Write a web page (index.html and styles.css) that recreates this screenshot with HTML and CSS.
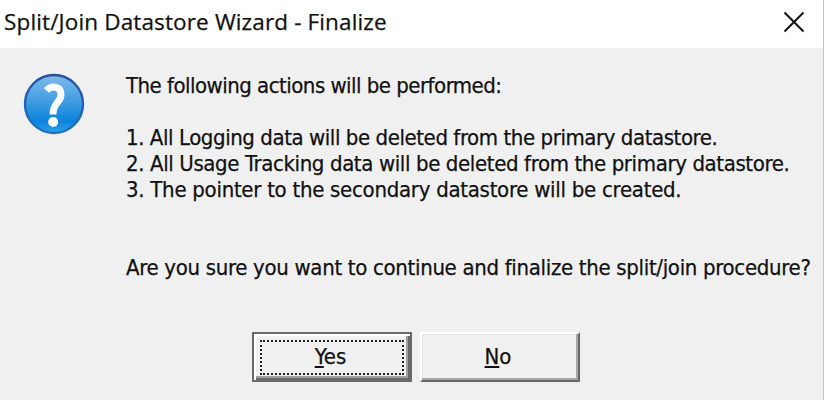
FILE: index.html
```html
<!DOCTYPE html>
<html lang="en">

<head>
	<meta charset="utf-8">
	<title>Split/Join Datastore Wizard - Finalize</title>

	<link rel="stylesheet" href="styles.css">

</head>

<body>

	<div class="dialog">
		<div class="titlebar">
			<span class="title">Split/Join Datastore Wizard - Finalize</span>
			<svg class="close" viewBox="0 0 22 22">
				<path d="M1.5 1.5 L20.5 20.5 M20.5 1.5 L1.5 20.5" />
			</svg>
		</div>

		<div class="content">
			<svg class="icon" viewBox="0 0 62 62">
				<defs>
					<linearGradient id="blue" x1="0" y1="0" x2="0" y2="1">
						<stop offset="0" stop-color="#7cbcec" />
						<stop offset=".45" stop-color="#429de0" />
						<stop offset=".8" stop-color="#0a82dc" />
						<stop offset="1" stop-color="#2ba4ee" />
					</linearGradient>
					<linearGradient id="ring" x1="0" y1="0" x2="0" y2="1">
						<stop offset="0" stop-color="#2a4f9c" />
						<stop offset="1" stop-color="#1f6fc4" />
					</linearGradient>
				</defs>
				<circle cx="31" cy="31" r="29" fill="url(#blue)" stroke="url(#ring)" stroke-width="2.4" />
				<path d="M23.5 17.5 C28 12.5 38 12.5 38 21.5 C38 30 30 29 30 41.5" fill="none" stroke="#fff" stroke-width="7" />
				<circle cx="30.2" cy="49" r="5" fill="#fff" />
			</svg>

			<div class="message">
				<p class="intro">The following actions will be performed:</p>
				<p class="one">1. All Logging data will be deleted from the primary datastore.</p>
				<p class="two">2. All Usage Tracking data will be deleted from the primary datastore.</p>
				<p class="three">3. The pointer to the secondary datastore will be created.</p>
				<p class="question">Are you sure you want to continue and finalize the split/join procedure?</p>
			</div>
		</div>

		<div class="buttons">
			<button class="default"><span class="focus"><span class="key">Y</span>es</span></button>
			<button><span class="key">N</span>o</button>
		</div>
	</div>

</body>

</html>
```

FILE: styles.css
```css
body {
	margin: 0;
	font-family: "DejaVu Sans Condensed", "DejaVu Sans", sans-serif;
	font-stretch: condensed;
	font-size: 22px;
	color: #111;
	-webkit-text-stroke: .25px #111;
}

.dialog {
	box-sizing: border-box;
	width: 824px;
	height: 400px;
	background-color: #f0f0f0;
	border-right: 1px solid #c4c4c4;
	overflow: hidden;
}

.titlebar {
	display: flex;
	align-items: center;
	justify-content: space-between;
	box-sizing: border-box;
	height: 48px;
	padding: 0 18px 4px 4px;
	background-color: #fff;
}

.title {
	padding-bottom: 2px;
	font-family: "Open Sans", "Noto Sans", sans-serif;
	font-stretch: normal;
	font-size: 22.5px;
	letter-spacing: .14px;
	white-space: nowrap;
}

.close {
	width: 22px;
	height: 22px;
	fill: none;
	stroke: #111;
	stroke-width: 2;
}

.content {
	display: flex;
	height: 284px;
}

.icon {
	width: 62px;
	height: 62px;
	margin: 25px 41px 0 23px;
	flex-shrink: 0;
}

.message {
	padding-top: 25px;
}

.message p {
	margin: 0;
	line-height: 26px;
	white-space: nowrap;
}

.message .intro {
	margin-bottom: 26px;
	letter-spacing: -.52px;
}

.one {
	letter-spacing: -.43px;
}

.two {
	letter-spacing: -.38px;
}

.three {
	letter-spacing: -.28px;
}

.message .question {
	margin-top: 52px;
	letter-spacing: -.32px;
}

.buttons {
	display: flex;
	gap: 8px;
	padding-left: 252px;
}

button {
	box-sizing: border-box;
	width: 160px;
	height: 50px;
	padding: 0 4px 2px 0;
	border: 2px solid;
	border-color: #fff #696969 #696969 #fff;
	background-color: #f0f0f0;
	box-shadow: inset -2px -2px 0 #a8a8a8, inset 1px 1px 0 #e3e3e3;
	font: inherit;
	color: inherit;
}

.default {
	padding: 0;
	border-color: #696969;
	box-shadow: inset 2px 2px 0 #fff, inset -2px -2px 0 #696969, inset -4px -4px 0 #a0a0a0;
}

.focus {
	display: block;
	box-sizing: border-box;
	height: 35px;
	margin: 0 6px;
	padding-right: 3px;
	border: 2px dotted #222;
	line-height: 29px;
}

.key {
	text-decoration: underline;
	text-decoration-thickness: 2px;
	text-underline-offset: 2px;
}
```
